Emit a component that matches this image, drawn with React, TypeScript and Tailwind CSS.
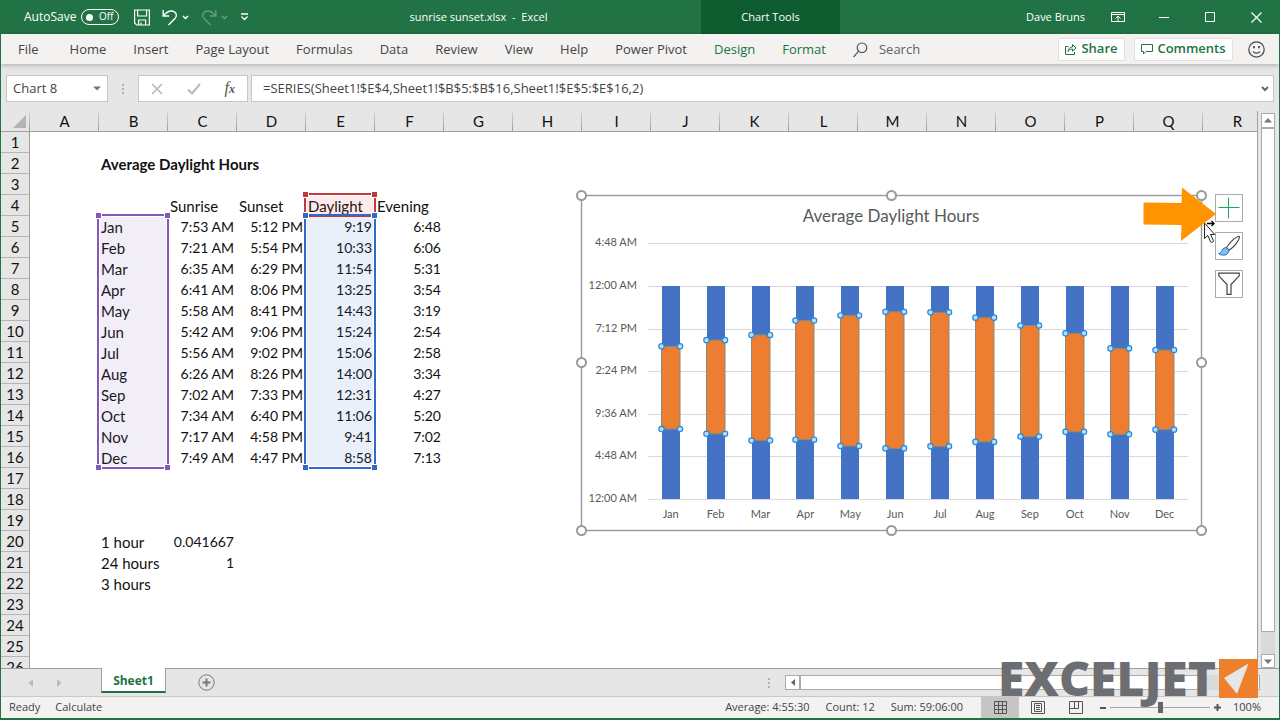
import { ReactNode } from "react";

const UI = "font-['Open_Sans','Noto_Sans',sans-serif]";
const CELL = "font-['Lato',sans-serif]";

const COLUMNS = "ABCDEFGHIJKLMNOPQR".split("");
const ROWS = Array.from({ length: 26 }, (_, i) => i + 1);

type Month = {
  name: string;
  sunrise: string;
  sunset: string;
  daylight: string;
  evening: string;
};

const MONTHS: Month[] = [
  { name: "Jan", sunrise: "7:53 AM", sunset: "5:12 PM", daylight: "9:19", evening: "6:48" },
  { name: "Feb", sunrise: "7:21 AM", sunset: "5:54 PM", daylight: "10:33", evening: "6:06" },
  { name: "Mar", sunrise: "6:35 AM", sunset: "6:29 PM", daylight: "11:54", evening: "5:31" },
  { name: "Apr", sunrise: "6:41 AM", sunset: "8:06 PM", daylight: "13:25", evening: "3:54" },
  { name: "May", sunrise: "5:58 AM", sunset: "8:41 PM", daylight: "14:43", evening: "3:19" },
  { name: "Jun", sunrise: "5:42 AM", sunset: "9:06 PM", daylight: "15:24", evening: "2:54" },
  { name: "Jul", sunrise: "5:56 AM", sunset: "9:02 PM", daylight: "15:06", evening: "2:58" },
  { name: "Aug", sunrise: "6:26 AM", sunset: "8:26 PM", daylight: "14:00", evening: "3:34" },
  { name: "Sep", sunrise: "7:02 AM", sunset: "7:33 PM", daylight: "12:31", evening: "4:27" },
  { name: "Oct", sunrise: "7:34 AM", sunset: "6:40 PM", daylight: "11:06", evening: "5:20" },
  { name: "Nov", sunrise: "7:17 AM", sunset: "4:58 PM", daylight: "9:41", evening: "7:02" },
  { name: "Dec", sunrise: "7:49 AM", sunset: "4:47 PM", daylight: "8:58", evening: "7:13" },
];

type Cell = { text: string; kind?: "right" | "bold" };

const CELLS: Record<string, Cell> = {
  B2: { text: "Average Daylight Hours", kind: "bold" },
  C4: { text: "Sunrise" },
  D4: { text: "Sunset" },
  E4: { text: "Daylight" },
  F4: { text: "Evening" },
  B20: { text: "1 hour" },
  C20: { text: "0.041667", kind: "right" },
  B21: { text: "24 hours" },
  C21: { text: "1", kind: "right" },
  B22: { text: "3 hours" },
};

MONTHS.forEach((m, i) => {
  const row = i + 5;
  CELLS[`B${row}`] = { text: m.name };
  CELLS[`C${row}`] = { text: m.sunrise, kind: "right" };
  CELLS[`D${row}`] = { text: m.sunset, kind: "right" };
  CELLS[`E${row}`] = { text: m.daylight, kind: "right" };
  CELLS[`F${row}`] = { text: m.evening, kind: "right" };
});

function hours(time: string) {
  const [clock, half] = time.split(" ");
  const [h, m] = clock.split(":").map(Number);
  return (h % 12) + m / 60 + (half === "PM" ? 12 : 0);
}

function TitleBar() {
  return (
    <header className="flex h-[34px] shrink-0 bg-[#217346] text-[11px] text-white">
      <div className="flex w-[255px] items-center pl-[23px] text-xs">
        <span id="autosave">AutoSave</span>
        <button
          role="switch"
          aria-checked="false"
          aria-labelledby="autosave"
          className="ml-[5px] flex h-4 w-[38px] items-center justify-between rounded-full border border-white pr-[5px] pl-1 text-[10px]"
        >
          <span className="size-[7px] rounded-full bg-white" />
          Off
        </button>
        <button aria-label="Save" className="ml-[15px]">
          <svg width="16" height="17" viewBox="0 0 16 17" fill="none" stroke="white" strokeWidth="1.2">
            <path d="M.6 1h14.8v15H2.6l-2-2zM3.6 1v6h9V1M4.6 16v-5h7v5M7 13.5V16" />
          </svg>
        </button>
        <button aria-label="Undo" className="ml-3 flex items-center gap-1">
          <svg width="16" height="17" viewBox="0 0 16 17" fill="none" stroke="white" strokeWidth="1.4">
            <path d="M1.2 1v6h6M1.4 6.8C4 3.5 7 1.6 10 2c4 .6 5.8 4.5 3.2 7.300L6.500 16" />
          </svg>
          <svg width="7" height="5" viewBox="0 0 7 5" fill="none" stroke="white" strokeWidth="1.500">
            <path d="M1 1l2.500 2.500L6 1" />
          </svg>
        </button>
        <button aria-label="Redo" disabled className="ml-3 flex items-center gap-1 opacity-30">
          <svg width="16" height="17" viewBox="0 0 16 17" fill="none" stroke="white" strokeWidth="1.400">
            <path d="M14.800 1v6h-6M14.600 6.800C12 3.500 9 1.600 6 2 2 2.600.2 6.500 2.800 9.300L9.500 16" />
          </svg>
          <svg width="7" height="5" viewBox="0 0 7 5" fill="none" stroke="white" strokeWidth="1.500">
            <path d="M1 1l2.500 2.500L6 1" />
          </svg>
        </button>
        <button aria-label="Customize toolbar" className="ml-3">
          <svg width="9" height="8" viewBox="0 0 9 8" fill="none" stroke="white" strokeWidth="1.300">
            <path d="M1 1h7M1.500 3.500l3 3 3-3" />
          </svg>
        </button>
      </div>
      <h1 className="flex flex-1 items-center justify-center whitespace-pre">sunrise sunset.xlsx  -  Excel</h1>
      <div className="flex w-[139px] items-center justify-center bg-[#0e5c2f]">Chart Tools</div>
      <div className="flex w-[439px] items-center justify-end">
        <span className="mr-[26px]">Dave Bruns</span>
        <button aria-label="Ribbon display options" className="mr-[34px]">
          <svg width="14" height="12" viewBox="0 0 14 12" fill="none" stroke="white">
            <path d="M.5 1.500h13v9H.5zM.5 3.500h13M7 10V5.500M4.500 7.500L7 5l2.500 2.500" />
          </svg>
        </button>
        <button aria-label="Minimize" className="mr-9">
          <svg width="10" height="10" viewBox="0 0 10 10" stroke="white">
            <path d="M0 5.500h10" />
          </svg>
        </button>
        <button aria-label="Maximize" className="mr-9">
          <svg width="10" height="10" viewBox="0 0 10 10" fill="none" stroke="white">
            <path d="M.5.5h9v9h-9z" />
          </svg>
        </button>
        <button aria-label="Close" className="mr-[17px]">
          <svg width="11" height="11" viewBox="0 0 11 11" stroke="white" strokeWidth="1.200">
            <path d="M.5.500l10 10M10.500.500l-10 10" />
          </svg>
        </button>
      </div>
    </header>
  );
}

const TABS = ["Home", "Insert", "Page Layout", "Formulas", "Data", "Review", "View", "Help", "Power Pivot"];

function RibbonTabs() {
  return (
    <nav className="z-10 flex h-[30px] shrink-0 items-center bg-[#f3f2f1] pl-1 text-[13px] text-[#444] shadow-[0_1px_5px_rgba(0,0,0,0.25)]">
      <div className="flex items-center gap-px pt-[2px]">
        <button className="mr-1 px-[13px]">File</button>
        {TABS.map((t) => (
          <button key={t} className="px-[13px] whitespace-nowrap">
            {t}
          </button>
        ))}
        {["Design", "Format"].map((t) => (
          <button key={t} className="px-[13px] whitespace-nowrap text-[#217346]">
            {t}
          </button>
        ))}
      </div>
      <button className="ml-[14px] flex items-center gap-[11px] pt-[2px] text-[#605e5c]">
        <svg width="15" height="16" viewBox="0 0 15 16" fill="none" stroke="#555" strokeWidth="1.200">
          <circle cx="9" cy="5.800" r="4.800" />
          <path d="M5.600 9.200L.6 15" />
        </svg>
        Search
      </button>
      <div className="ml-auto flex items-center gap-[9px] pr-[14px] font-semibold text-[#217346]">
        <button className="flex h-[23px] w-[67px] items-center justify-center gap-1 rounded-[2px] border border-[#e1dfdd] bg-white">
          <svg width="12" height="12" viewBox="0 0 12 12" fill="none" stroke="#217346">
            <path d="M3.500 3.500h-3v8h9V9M3 8.500c.3-3 2-4.500 4.500-4.500V1.500L11 5 7.500 8.200V6C5.500 6 4 6.800 3 8.500z" />
          </svg>
          Share
        </button>
        <button className="flex h-[23px] w-[99px] items-center justify-center gap-1 rounded-[2px] border border-[#e1dfdd] bg-white">
          <svg width="12" height="12" viewBox="0 0 12 12" fill="none" stroke="#217346">
            <path d="M.5 1.500h11v7H5l-2.500 2.500V8.500h-2z" />
          </svg>
          Comments
        </button>
        <button aria-label="Feedback" className="ml-[6px]">
          <svg width="17" height="17" viewBox="0 0 17 17" fill="none" stroke="#444" strokeWidth="1.200">
            <circle cx="8.500" cy="8.500" r="7.700" />
            <path d="M5 10.500c1.500 2.200 5.500 2.200 7 0" />
            <path d="M6 5v2.200M11 5v2.200" strokeWidth="1.700" />
          </svg>
        </button>
      </div>
    </nav>
  );
}

function Dots() {
  return (
    <div className="flex flex-col gap-[2px]">
      <span className="size-[2px] bg-[#b0b0b0]" />
      <span className="size-[2px] bg-[#b0b0b0]" />
      <span className="size-[2px] bg-[#b0b0b0]" />
    </div>
  );
}

function FormulaBar() {
  return (
    <div className="flex shrink-0 items-center pt-[11px] pr-[5px] pb-[9px] pl-[5px] text-[13px] text-[#444]">
      <div className="flex h-[27px] w-[102px] items-center border border-[#c6c6c6] bg-white">
        <input aria-label="Name box" defaultValue="Chart 8" className="w-[80px] bg-transparent pl-[6px] outline-none" />
        <button aria-label="Open name list" className="ml-[6px]">
          <svg width="8" height="5" viewBox="0 0 8 5">
            <path d="M0 .5h8l-4 4z" fill="#777" />
          </svg>
        </button>
      </div>
      <div className="flex w-[30px] justify-center">
        <Dots />
      </div>
      <div className="flex h-[27px] w-[110px] items-center justify-between border border-[#c6c6c6] bg-white px-3">
        <button aria-label="Cancel">
          <svg width="12" height="12" viewBox="0 0 12 12" stroke="#b8b8b8" strokeWidth="1.600">
            <path d="M1 1l10 10M11 1L1 11" />
          </svg>
        </button>
        <button aria-label="Enter">
          <svg width="14" height="12" viewBox="0 0 14 12" fill="none" stroke="#b8b8b8" strokeWidth="2">
            <path d="M1 6.500l4 4L13 1" />
          </svg>
        </button>
        <button aria-label="Insert function" className="font-['Liberation_Serif',serif] text-base leading-4 text-[#555] italic">
          f<span className="text-xs font-bold">x</span>
        </button>
      </div>
      <div className="ml-[3px] flex h-[27px] flex-1 items-center border border-[#c6c6c6] bg-white">
        <input
          aria-label="Formula"
          defaultValue="=SERIES(Sheet1!$E$4,Sheet1!$B$5:$B$16,Sheet1!$E$5:$E$16,2)"
          className="flex-1 bg-transparent pl-[11px] outline-none"
        />
        <button aria-label="Expand formula bar" className="mr-1">
          <svg width="8" height="6" viewBox="0 0 8 6" fill="none" stroke="#666" strokeWidth="2">
            <path d="M1 1l3 3 3-3" />
          </svg>
        </button>
      </div>
    </div>
  );
}

function Sheet() {
  return (
    <table className={`${CELL} w-[1271px] table-fixed border-separate border-spacing-0 text-sm leading-5 text-[#111]`}>
      <colgroup>
        <col className="w-[29px]" />
        {COLUMNS.map((c) => (
          <col key={c} className="w-[69px]" />
        ))}
      </colgroup>
      <thead>
        <tr className="h-[21px] bg-[#e6e6e6] text-[15px]">
          <th
            aria-label="Select all"
            className="border-b border-[#9f9f9f] bg-[linear-gradient(#d8d8d8,#9a9a9a)] bg-[length:1px_100%] bg-right bg-no-repeat p-0 align-bottom"
          >
            <svg width="13" height="13" viewBox="0 0 13 13" className="mb-[3px] ml-3">
              <path d="M13 0v13H0z" fill="#b4b4b4" />
            </svg>
          </th>
          {COLUMNS.map((c) => (
            <th
              key={c}
              scope="col"
              className="border-b border-[#9f9f9f] bg-[linear-gradient(#d8d8d8,#9a9a9a)] bg-[length:1px_100%] bg-right bg-no-repeat p-0 font-normal"
            >
              {c}
            </th>
          ))}
        </tr>
      </thead>
      <tbody>
        {ROWS.map((r) => (
          <tr key={r} className="h-[21px]">
            <th scope="row" className="border-r border-b border-r-[#9f9f9f] border-b-[#b5b5b5] bg-[#e6e6e6] p-0 text-[15px] font-normal">
              {r}
            </th>
            {COLUMNS.map((c) => {
              const cell = CELLS[`${c}${r}`];
              if (!cell) return <td key={c} className="p-0" />;
              return (
                <td
                  key={c}
                  className={
                    cell.kind === "right"
                      ? "p-0 pr-[3px] text-right whitespace-nowrap"
                      : cell.kind === "bold"
                        ? "p-0 pl-[2px] text-[15px] font-bold whitespace-nowrap"
                        : "p-0 pl-[2px] text-[15px] whitespace-nowrap"
                  }
                >
                  {cell.text}
                </td>
              );
            })}
          </tr>
        ))}
      </tbody>
    </table>
  );
}

function RangeMark({ place, line, fill, handle }: { place: string; line: string; fill: string; handle: string }) {
  return (
    <div className={`pointer-events-none absolute border-2 ${place} ${line}`}>
      <div className={`absolute inset-px ${fill}`} />
      <span className={`absolute -top-1 -left-1 size-[7px] border border-white ${handle}`} />
      <span className={`absolute -top-1 -right-1 size-[7px] border border-white ${handle}`} />
      <span className={`absolute -bottom-1 -left-1 size-[7px] border border-white ${handle}`} />
      <span className={`absolute -right-1 -bottom-1 size-[7px] border border-white ${handle}`} />
    </div>
  );
}

const AXIS = ["12:00 AM", "4:48 AM", "9:36 AM", "2:24 PM", "7:12 PM", "12:00 AM", "4:48 AM"];

/* Chart geometry, in pixels inside the drawing. */
const BASE = 309;
const PER_HOUR = 213 / 24;
const FIRST = 95;
const STEP = 44.9;

function Chart() {
  const y = (h: number) => BASE - h * PER_HOUR;
  return (
    <svg
      role="img"
      aria-label="Average Daylight Hours"
      width="632"
      height="347"
      viewBox="0 0 632 347"
      className={`${CELL} absolute top-[79px] left-[574px]`}
    >
      <rect x="6.500" y="5.500" width="620" height="335" fill="white" stroke="#999" strokeWidth="1.400" />
      <text x="316" y="32" textAnchor="middle" fontSize="17" fill="#595959">
        Average Daylight Hours
      </text>
      {AXIS.map((label, i) => {
        const line = Math.round(y(i * 4.8)) + 0.5;
        return (
          <g key={i}>
            <path d={`M73 ${line}h540`} stroke="#d9d9d9" />
            <text x="62" y={line + 2} textAnchor="end" fontSize="11" fill="#595959">
              {label}
            </text>
          </g>
        );
      })}
      {MONTHS.map((m, i) => {
        const cx = FIRST + 0.7 + i * STEP;
        const left = Math.round(cx - 9);
        const top = y(hours(m.sunset));
        const bottom = y(hours(m.sunrise));
        return (
          <g key={m.name}>
            <rect x={left} y={y(24)} width="18" height={BASE - y(24)} fill="#4472c4" />
            <rect x={left - 0.5} y={top} width="18.500" height={bottom - top} fill="#ed7d31" stroke="#8a8a7a" />
            {[top, bottom].map((cy) =>
              [left - 0.5, left + 18].map((x) => (
                <circle key={`${x}-${cy}`} cx={x} cy={cy} r="2.700" fill="#bfdcf3" stroke="#1f8ae0" strokeWidth="1.200" />
              )),
            )}
            <text x={cx} y="328" textAnchor="middle" fontSize="11" fill="#595959">
              {m.name}
            </text>
          </g>
        );
      })}
      {[6.5, 316.5, 626.5].map((x) =>
        [5.5, 172.5, 340.5].map((cy) =>
          x === 316.5 && cy === 172.5 ? null : (
            <circle key={`${x}-${cy}`} cx={x} cy={cy} r="4.500" fill="white" stroke="#999" strokeWidth="2" />
          ),
        ),
      )}
    </svg>
  );
}

function ChartButton({ label, children }: { label: string; children: ReactNode }) {
  return (
    <button aria-label={label} className="flex size-7 items-center justify-center border border-[#ababab] bg-white">
      {children}
    </button>
  );
}

function ChartButtons() {
  return (
    <div className="absolute top-[83px] left-[1214px] flex flex-col gap-[10px]">
      <ChartButton label="Chart elements">
        <svg width="22" height="22" viewBox="0 0 22 22" stroke="#22a455" strokeWidth="1">
          <path d="M.5 10.500h21M10.500.5v21" />
        </svg>
      </ChartButton>
      <ChartButton label="Chart styles">
        <svg width="24" height="22" viewBox="0 0 24 22" fill="none">
          <path d="M9.500 12.500C13 7 18.500 2.200 21.500 1.200c1 0 1.200.8.800 1.800-1.600 4.200-6 9.500-10.300 12.200z" fill="white" stroke="#444" strokeWidth="1.100" />
          <path d="M1.500 18.500c2-.3 3-1.500 3.500-3.200.7-2 3-3.200 4.800-2.300 2 .9 2.500 3.300 1.200 5.200-2 2.600-6.500 2.600-9.500.3z" fill="#83bdec" stroke="#1e73be" />
        </svg>
      </ChartButton>
      <ChartButton label="Chart filters">
        <svg width="22" height="24" viewBox="0 0 22 24" fill="none" stroke="#444" strokeWidth="1.200">
          <path d="M.8 1.200h20.400v2.600L13 12.500v9.800H9v-9.800L.8 3.800z" />
        </svg>
      </ChartButton>
    </div>
  );
}

function Pointer() {
  return (
    <svg aria-hidden="true" width="76" height="60" viewBox="0 0 76 60" className="absolute top-[74px] left-[1140px]">
      <path d="M63.500 38v15.500l3.300-3 2.700 6.300c.8 1.200 3.200.3 3-1L69.500 49.500h4.200z" fill="white" stroke="#222" />
      <path d="M66 38.500h6M70.500 36l2.500 2.500-2.500 2.500" fill="none" stroke="#000" strokeWidth="1.400" />
      <path d="M2.500 17.500l38 .5L41 2.500 75 29 40 56l.5-16-38-.5z" fill="#ff9400" />
    </svg>
  );
}

function VerticalScroll() {
  return (
    <div className="flex w-[21px] shrink-0 flex-col pt-[2px] pr-1 pl-[3px]">
      <button aria-label="Scroll up" className="flex h-[15px] items-center justify-center border border-[#ababab] bg-white">
        <svg width="8" height="5" viewBox="0 0 8 5">
          <path d="M0 4.500h8L4 0z" fill="#777" />
        </svg>
      </button>
      <div className="flex flex-1 flex-col bg-[#dadada]">
        <div className="grow-[504] border border-[#ababab] bg-white" />
        <div className="grow-[22]" />
      </div>
      <button aria-label="Scroll down" className="flex h-[14px] items-center justify-center border border-[#ababab] bg-white">
        <svg width="8" height="5" viewBox="0 0 8 5">
          <path d="M0 .5h8L4 5z" fill="#777" />
        </svg>
      </button>
    </div>
  );
}

function SheetTabs() {
  return (
    <div className="flex h-7 shrink-0 items-start">
      <div className="flex h-full w-[100px] items-center gap-6 border-t border-[#9f9f9f] pl-[27px]">
        <button aria-label="Previous sheet">
          <svg width="5" height="8" viewBox="0 0 5 8">
            <path d="M5 0v8L.5 4z" fill="#bbb" />
          </svg>
        </button>
        <button aria-label="Next sheet">
          <svg width="5" height="8" viewBox="0 0 5 8">
            <path d="M0 0v8l4.500-4z" fill="#bbb" />
          </svg>
        </button>
      </div>
      <button className="h-[25px] w-[65px] border-x border-b-2 border-x-[#9f9f9f] border-b-[#217346] bg-white pt-[3px] text-xs font-bold text-[#217346]">
        Sheet1
      </button>
      <div className="flex h-full flex-1 items-center border-t border-[#9f9f9f] pr-[19px] pl-8">
        <button aria-label="New sheet">
          <svg width="17" height="17" viewBox="0 0 17 17" fill="none" stroke="#777">
            <circle cx="8.500" cy="8.500" r="7.700" />
            <path d="M8.500 4.500v8M4.500 8.500h8" strokeWidth="2" />
          </svg>
        </button>
        <div className="mr-[15px] ml-auto">
          <Dots />
        </div>
        <div className="flex h-[15px] w-[475px] bg-[#dadada]">
          <button aria-label="Scroll left" className="flex w-[15px] items-center justify-center border border-[#ababab] bg-white">
            <svg width="4" height="7" viewBox="0 0 4 7">
              <path d="M4 0v7L0 3.500z" fill="#666" />
            </svg>
          </button>
          <div className="w-[406px] border border-[#ababab] bg-white" />
          <div className="flex-1" />
          <button aria-label="Scroll right" className="w-[15px] border border-[#ababab] bg-white" />
        </div>
      </div>
    </div>
  );
}

function StatusBar() {
  return (
    <footer className="flex h-[22px] shrink-0 items-center border-t border-[#c8c8c8] bg-[#f3f2f1] pr-[18px] pl-2 text-[11px] text-[#444]">
      <span>Ready</span>
      <span className="ml-[15px]">Calculate</span>
      <span className="ml-auto">Average: 4:55:30</span>
      <span className="ml-4">Count: 12</span>
      <span className="ml-4">Sum: 59:06:00</span>
      <button aria-label="Normal view" className="ml-[18px] flex h-full w-[38px] items-center justify-center bg-[#c8c6c4]">
        <svg width="13" height="13" viewBox="0 0 13 13" fill="none" stroke="#555">
          <path d="M.5.5h12v12H.5zM4.500 0v13M8.500 0v13M0 4.500h13M0 8.500h13" />
        </svg>
      </button>
      <button aria-label="Page layout view" className="flex h-full w-[38px] items-center justify-center">
        <svg width="14" height="13" viewBox="0 0 14 13" fill="none" stroke="#555">
          <path d="M.5.5h13v12H.5zM3.500 2.500h7v8h-7zM5 4.500h4M5 6.500h4M5 8.500h4" />
        </svg>
      </button>
      <button aria-label="Page break view" className="flex h-full w-[38px] items-center justify-center">
        <svg width="14" height="13" viewBox="0 0 14 13" fill="none" stroke="#555">
          <path d="M.5.5h13v12H.5zM5.500 0v7.500M9.500 0v7.500M0 7.500h9.500" />
        </svg>
      </button>
      <button aria-label="Zoom out" className="ml-[5px] h-[2px] w-[6px] bg-[#555]" />
      <input
        type="range"
        aria-label="Zoom"
        min="10"
        max="190"
        defaultValue="100"
        className="mx-1 h-3 w-[100px] appearance-none bg-[linear-gradient(#a6a6a6,#a6a6a6)] bg-[length:100%_1px] bg-center bg-no-repeat [&::-webkit-slider-thumb]:h-[11px] [&::-webkit-slider-thumb]:w-[5px] [&::-webkit-slider-thumb]:appearance-none [&::-webkit-slider-thumb]:bg-[#666]"
      />
      <button aria-label="Zoom in">
        <svg width="7" height="7" viewBox="0 0 7 7" stroke="#555" strokeWidth="2">
          <path d="M0 3.500h7M3.500 0v7" />
        </svg>
      </button>
      <span className="ml-3">100%</span>
    </footer>
  );
}

function Watermark() {
  return (
    <div className="pointer-events-none absolute right-[21px] bottom-[20px] flex items-center gap-[3px]">
      <span className="font-['Open_Sans','Noto_Sans',sans-serif] text-5xl leading-10 font-extrabold text-[#6d6e71]">EXCELJET</span>
      <svg width="39" height="39" viewBox="0 0 39 39">
        <path d="M0 0h39v39H0z" fill="#ee7f2d" />
        <path d="M29.500 4.500L5 19l13 16z" fill="#e6e6e6" />
      </svg>
    </div>
  );
}

export default function App() {
  return (
    <div className={`${UI} relative flex h-screen flex-col overflow-hidden border-x border-b-2 border-[#217346] bg-[#e6e6e6]`}>
      <TitleBar />
      <RibbonTabs />
      <FormulaBar />
      <main className="flex min-h-0 flex-1">
        <div className="relative flex-1 overflow-hidden border-r border-[#9f9f9f] bg-white">
          <Sheet />
          <RangeMark place="top-[82px] left-[303px] h-[24px] w-[72px]" line="border-[#c0393f]" fill="bg-[#dc3c32]/10" handle="bg-[#c0393f]" />
          <RangeMark place="top-[103px] left-[96px] h-[255px] w-[72px]" line="border-[#8458b8]" fill="bg-[#8458b8]/10" handle="bg-[#8458b8]" />
          <RangeMark place="top-[103px] left-[303px] h-[255px] w-[72px]" line="border-[#3369c6]" fill="bg-[#3369c6]/10" handle="bg-[#3369c6]" />
          <Chart />
          <ChartButtons />
          <Pointer />
        </div>
        <VerticalScroll />
      </main>
      <SheetTabs />
      <StatusBar />
      <Watermark />
    </div>
  );
}
